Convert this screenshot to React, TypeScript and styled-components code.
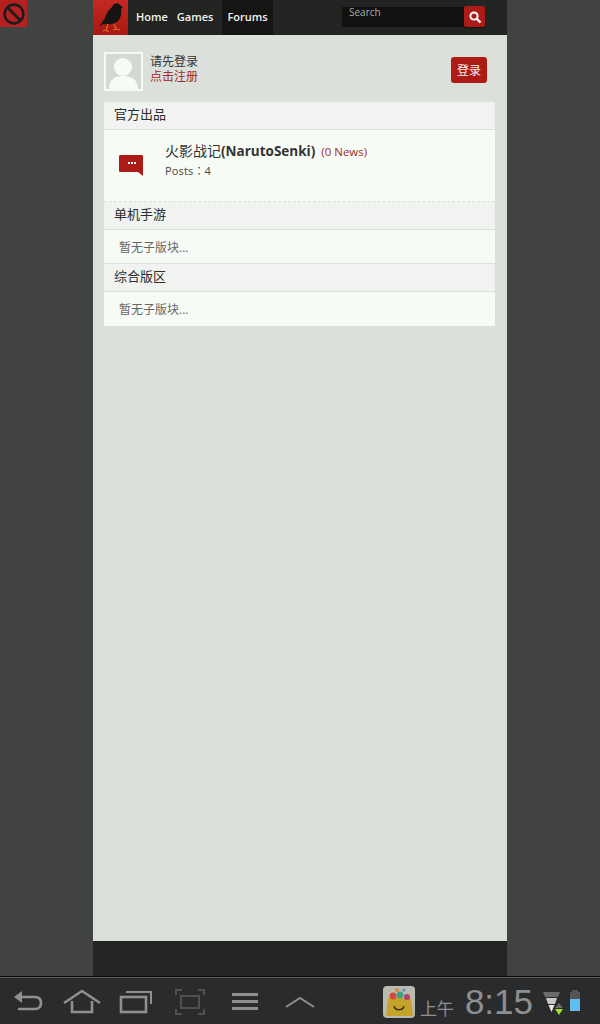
import React from "react";
import styled, { createGlobalStyle } from "styled-components";

const Global = createGlobalStyle`
  html, body { margin: 0; padding: 0; background: #404241; }
  * { box-sizing: border-box; }
  body { font-family: "Open Sans", "Noto Sans CJK SC", sans-serif; }
`;

const Screen = styled.div`
  position: relative;
  width: 600px;
  height: 1024px;
  display: flex;
  flex-direction: column;
  overflow: hidden;
  background: repeating-linear-gradient(90deg, #424443 0 1px, #404241 1px 2px);
`;
const Viewport = styled.div`
  height: 976px;
  display: flex;
  justify-content: center;
`;
const Column = styled.div`
  width: 414px;
  display: flex;
  flex-direction: column;
`;
const TopBar = styled.header`
  height: 35px;
  display: flex;
  align-items: stretch;
  background: repeating-conic-gradient(#252824 0 25%, #1f211e 0 50%) 0 0 / 2px 2px;
`;
const Logo = styled.div`
  width: 35px;
  background: linear-gradient(180deg, #c42a22 0%, #a81712 100%);
  display: flex;
  align-items: center;
  justify-content: center;
`;
const Nav = styled.nav`
  display: flex;
  padding-left: 3.5px;
`;
const NavItem = styled.a<{ $active?: boolean }>`
  display: flex;
  align-items: center;
  justify-content: center;
  padding: 0 ${(p) => (p.$active ? "5px" : "4.5px")} 2px;
  margin-left: ${(p) => (p.$active ? "4.5px" : "0")};
  font-size: 11px;
  font-weight: 600;
  color: #f2f4f0;
  background: ${(p) => (p.$active ? "#151614" : "transparent")};
`;
const SearchArea = styled.div`
  margin-left: auto;
  margin-right: 22px;
  display: flex;
  align-items: flex-start;
  padding-top: 6px;
`;
const SearchInput = styled.div`
  width: 122px;
  height: 20px;
  margin-top: 1px;
  background: #111210;
  color: #a9aca8;
  font-size: 10px;
  line-height: 11px;
  padding: 0 7px;
`;
const SearchButton = styled.div`
  width: 21px;
  height: 21px;
  border-radius: 2px;
  background: #ad1b17;
  box-shadow: 0 1px 1px rgba(0, 0, 0, 0.5);
  display: flex;
  align-items: center;
  justify-content: center;
`;
const Content = styled.main`
  flex: 1;
  background: repeating-conic-gradient(#d9ded9 0 25%, #dee2dd 0 50%) 0 0 / 2px 2px;
  padding: 17px 12px 0 11px;
`;
const Profile = styled.section`
  height: 39px;
  display: flex;
  align-items: flex-start;
  margin-bottom: 11px;
`;
const Avatar = styled.div`
  width: 39px;
  height: 39px;
  border: 2px solid #f6faf5;
  background: #d5d9d5;
  overflow: hidden;
`;
const ProfileText = styled.div`
  margin-left: 7px;
  padding-top: 3px;
  font-size: 12px;
  line-height: 14.5px;
  color: #333;
`;
const RedLink = styled.div`
  color: #a32a26;
`;
const LoginButton = styled.div`
  margin-left: auto;
  margin-right: 8px;
  margin-top: 5px;
  width: 36px;
  height: 26px;
  border-radius: 3px;
  background: #ad1b17;
  color: #fbeeee;
  font-size: 12px;
  display: flex;
  align-items: center;
  justify-content: center;
`;
const SectionHeader = styled.div`
  height: 28px;
  padding-left: 10px;
  background: #f0f3ef;
  border-bottom: 1px solid #dbe0db;
  font-size: 13px;
  line-height: 24px;
  color: #2c2c2c;
`;
const ForumRow = styled.div`
  height: 72px;
  display: flex;
  background: #f7fbf6;
  border-bottom: 1px dashed #dbe0db;
  padding: 12px 0 0 15px;
`;
const ForumIcon = styled.div`
  width: 24px;
  height: 24px;
  margin-top: 12px;
`;
const ForumBody = styled.div`
  margin-left: 22px;
`;
const ForumTitle = styled.div`
  font-size: 14px;
  line-height: 17px;
  color: #333;
  display: flex;
  align-items: baseline;
`;
const ForumName = styled.span`
  font-size: 13.5px;
  font-weight: 700;
`;
const NewsCount = styled.span`
  margin-left: 6px;
  font-size: 11.5px;
  color: #a32a26;
`;
const Posts = styled.div`
  margin-top: 3px;
  font-family: "Open Sans", "Noto Sans CJK TC", sans-serif;
  font-size: 11px;
  line-height: 16px;
  color: #484848;
  letter-spacing: 0.15px;
`;
const EmptyRow = styled.div`
  height: 34px;
  background: #f7fbf6;
  border-bottom: 1px solid #dbe0db;
  padding-left: 15px;
  font-size: 12px;
  line-height: 35px;
  color: #666;
  &:last-child {
    border-bottom: 0;
  }
`;
const Footer = styled.footer`
  height: 35px;
  background: repeating-conic-gradient(#252824 0 25%, #1f221e 0 50%) 0 0 / 2px 2px;
`;
const SystemBar = styled.div`
  height: 48px;
  display: flex;
  align-items: center;
  background: #2a2b2c;
  border-top: 1px solid #0e0f0f;
  box-shadow: inset 0 1px 0 #5a5c5c;
  padding-top: 3px;
`;
const SoftKeys = styled.div`
  display: flex;
  align-items: center;
  flex: 1;
`;
const SoftKey = styled.svg<{ $w: number; $gap: number; $dim?: boolean }>`
  flex: none;
  width: ${(p) => p.$w}px;
  height: 28px;
  margin-left: ${(p) => p.$gap}px;
  color: ${(p) => (p.$dim ? "#4f5151" : "#8e908f")};
`;
const Tray = styled.div`
  display: flex;
  align-items: center;
  margin-right: 19px;
`;
const AppBadge = styled.svg`
  width: 32px;
  height: 32px;
`;
const AmPm = styled.span`
  margin-left: 5px;
  margin-top: 10px;
  font-size: 17px;
  color: #8e908f;
`;
const Clock = styled.span`
  margin-left: 11px;
  font-family: "Liberation Sans", sans-serif;
  font-size: 35px;
  line-height: 34px;
  color: #8e908f;
`;
const StatusIcon = styled.svg`
  width: 38px;
  height: 27px;
  margin-left: 10px;
`;
const BlockedBadge = styled.div`
  position: absolute;
  left: 0;
  top: 0;
  width: 27px;
  height: 27px;
  background: #b4211e;
  display: flex;
  align-items: center;
  justify-content: center;
`;

export default function App() {
  return (
    <Screen>
      <Global />
      <BlockedBadge>
        <svg width="24" height="24" viewBox="0 0 24 24" fill="none" stroke="#1c1c1c" strokeWidth="2.6">
          <circle cx="12" cy="12" r="9.4" />
          <line x1="5.5" y1="5.5" x2="18.5" y2="18.5" />
        </svg>
      </BlockedBadge>
      <Viewport>
        <Column>
          <TopBar>
            <Logo>
              <svg width="30" height="33" viewBox="0 0 30 33">
                <path d="M3 26 L9 17 C10 12 13 9 16 6 C17 2 22 1 24 4 L27 6 L25 8 C26 14 24 20 19 22 C15 24 10 23 7 23 Z" fill="#161412" />
                <path d="M12 23 L10 29 L7 30 M10 29 L13 31 M18 23 L20 28 L17 29 M20 28 L24 29" stroke="#d9711e" strokeWidth="1.2" fill="none" />
              </svg>
            </Logo>
            <Nav>
              <NavItem>Home</NavItem>
              <NavItem>Games</NavItem>
              <NavItem $active>Forums</NavItem>
            </Nav>
            <SearchArea>
              <SearchInput>Search</SearchInput>
              <SearchButton>
                <svg width="14" height="14" viewBox="0 0 14 14" fill="none" stroke="#fff">
                  <circle cx="6" cy="6" r="3.6" strokeWidth="2" />
                  <line x1="8.8" y1="8.8" x2="12.5" y2="12.5" strokeWidth="2.4" />
                </svg>
              </SearchButton>
            </SearchArea>
          </TopBar>
          <Content>
            <Profile>
              <Avatar>
                <svg width="35" height="35" viewBox="0 0 35 35" fill="#f7fbf6">
                  <circle cx="17" cy="13" r="9" />
                  <path d="M3 35 C3 26 8 22 17 22 C26 22 32 26 32 35 Z" />
                </svg>
              </Avatar>
              <ProfileText>
                <div>请先登录</div>
                <RedLink>点击注册</RedLink>
              </ProfileText>
              <LoginButton>登录</LoginButton>
            </Profile>
            <SectionHeader>官方出品</SectionHeader>
            <ForumRow>
              <ForumIcon>
                <svg width="24" height="24" viewBox="0 0 24 24">
                  <path d="M1.5 0 H22.5 C23.5 0 24 .5 24 1.5 V21 L19 17 H1.5 C.5 17 0 16.5 0 15.5 V1.5 C0 .5 .5 0 1.5 0 Z" fill="#ad1b17" transform="translate(0 1)" />
                  <rect x="9" y="8" width="2" height="2" fill="#fff" />
                  <rect x="12" y="8" width="2" height="2" fill="#fff" />
                  <rect x="15" y="8" width="2" height="2" fill="#fff" />
                </svg>
              </ForumIcon>
              <ForumBody>
                <ForumTitle>
                  火影战记<ForumName>(NarutoSenki)</ForumName>
                  <NewsCount>(0 News)</NewsCount>
                </ForumTitle>
                <Posts>Posts：4</Posts>
              </ForumBody>
            </ForumRow>
            <SectionHeader>单机手游</SectionHeader>
            <EmptyRow>暂无子版块...</EmptyRow>
            <SectionHeader>综合版区</SectionHeader>
            <EmptyRow>暂无子版块...</EmptyRow>
          </Content>
          <Footer />
        </Column>
      </Viewport>
      <SystemBar>
        <SoftKeys>
          <SoftKey $w={30} $gap={13} viewBox="0 0 30 28" fill="none" stroke="currentColor" strokeWidth="2.6">
            <path d="M5 9 H22 C27 9 28 12 28 15 C28 19 26 21 22 21 H5" />
            <path d="M1 9 L9 3 V15 Z" fill="currentColor" stroke="none" />
          </SoftKey>
          <SoftKey $w={38} $gap={20} viewBox="0 0 38 28" fill="none" stroke="currentColor" strokeWidth="2.6">
            <path d="M1 15 L19 3 L37 15" />
            <path d="M9 13 V24 H29 V13" />
          </SoftKey>
          <SoftKey $w={34} $gap={18} viewBox="0 0 34 28" fill="none" stroke="currentColor" strokeWidth="2.6">
            <rect x="2" y="9" width="25" height="15" />
            <path d="M7 4 H32 V16" strokeWidth="2" />
          </SoftKey>
          <SoftKey $w={30} $gap={22} $dim viewBox="0 0 30 28" fill="none" stroke="currentColor" strokeWidth="2">
            <rect x="6" y="8" width="18" height="12" />
            <path d="M1 7 V2 H7 M23 2 H29 V7 M1 21 V26 H7 M23 26 H29 V21" />
          </SoftKey>
          <SoftKey $w={26} $gap={27} viewBox="0 0 26 28" fill="currentColor">
            <rect x="0" y="5" width="26" height="3" />
            <rect x="0" y="12" width="26" height="3" />
            <rect x="0" y="19" width="26" height="3" />
          </SoftKey>
          <SoftKey $w={30} $gap={27} viewBox="0 0 30 28" fill="none" stroke="currentColor" strokeWidth="2">
            <path d="M1 19 L15 10 L29 19" />
          </SoftKey>
        </SoftKeys>
        <Tray>
          <AppBadge viewBox="0 0 32 32">
            <rect x="0" y="0" width="32" height="32" rx="4" fill="#b9bbb1" />
            <path d="M5 12 H28 L30 30 H3 Z" fill="#c6a42c" />
            <circle cx="10" cy="10" r="3.5" fill="#d34a37" />
            <circle cx="17" cy="9" r="3.5" fill="#3fa37e" />
            <circle cx="24" cy="11" r="3" fill="#b83a78" />
            <circle cx="14" cy="4" r="2" fill="#d68a3c" />
            <circle cx="21" cy="4" r="1.8" fill="#5a9bc8" />
            <path d="M11 20 C12 25 20 25 21 20" fill="none" stroke="#3a3414" strokeWidth="1.4" />
          </AppBadge>
          <AmPm>上午</AmPm>
          <Clock>8:15</Clock>
          <StatusIcon viewBox="0 0 38 27">
            <path d="M0 3 H17 L15 8 H2 Z" fill="#6b6d6c" />
            <path d="M3 9 H14 L12 15 H5 Z" fill="#c7c9c8" />
            <path d="M5.5 16 H11.5 L8.5 23 Z" fill="#e8e9e8" />
            <path d="M12 19 L16 14 L20 19 Z" fill="#6b6d6c" />
            <path d="M12 20 H20 L16 26 Z" fill="#9be22d" />
            <path d="M29 1 H35 V3 H37 V10 H27 V3 H29 Z" fill="#555" />
            <rect x="27" y="10" width="10" height="12" fill="#62bdf0" />
          </StatusIcon>
        </Tray>
      </SystemBar>
    </Screen>
  );
}
